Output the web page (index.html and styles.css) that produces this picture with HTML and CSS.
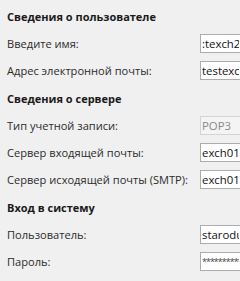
FILE: index.html
```html
<!DOCTYPE html>
<html lang="ru">

<head>
    <title>Параметры учетной записи</title>
    <meta charset="UTF-8">
    <link rel="stylesheet" href="styles.css">
</head>

<body>
    <section class="group">
        <h2>Сведения о пользователе</h2>
        <div class="row">
            <label for="name">Введите имя:</label>
            <input type="text" id="name" value=":texch2016" readonly>
        </div>
        <div class="row">
            <label for="email">Адрес электронной почты:</label>
            <input type="text" id="email" value="testexch2016@mail.local" readonly>
        </div>
    </section>
    <section class="group">
        <h2>Сведения о сервере</h2>
        <div class="row">
            <label for="type">Тип учетной записи:</label>
            <input type="text" id="type" value="POP3" disabled>
        </div>
        <div class="row">
            <label for="incoming">Сервер входящей почты:</label>
            <input type="text" id="incoming" value="exch01.mail.local" readonly>
        </div>
        <div class="row">
            <label for="outgoing">Сервер исходящей почты (SMTP):</label>
            <input type="text" id="outgoing" value="exch01.mail.local" readonly>
        </div>
    </section>
    <section class="group">
        <h2>Вход в систему</h2>
        <div class="row">
            <label for="user">Пользователь:</label>
            <input type="text" id="user" value="starodubov" readonly>
        </div>
        <div class="row">
            <label for="pass">Пароль:</label>
            <input type="text" id="pass" class="secret" value="**********" readonly>
        </div>
    </section>
</body>

</html>
```

FILE: styles.css
```css
html {
    height: 100%;
}

body {
    margin: 0;
    padding: 4px 0 0 7px;
    background-color: #f0f0f0;
    color: #2b2b2b;
    font-family: "Open Sans", "Noto Sans", sans-serif;
    font-size: 11.1px;
    overflow: hidden;
}

.group + .group {
    margin-top: 2px;
}

h2 {
    margin: 0;
    font-size: 11px;
    font-weight: bold;
    line-height: 26px;
    color: #1a1a1a;
}

.row {
    display: grid;
    grid-template-columns: 193px 1fr;
    align-items: center;
    height: 27px;
}

.row label {
    white-space: nowrap;
}

.row input {
    box-sizing: border-box;
    height: 19px;
    width: 100%;
    min-width: 0;
    margin: 0;
    padding: 0 1px;
    border: 1px solid #abadb3;
    border-right: none;
    background: #fff;
    color: #111;
    font-family: inherit;
    font-size: 11.4px;
    outline: none;
}

.row input:disabled {
    background: #f4f4f4;
    border-color: #d4d4d4;
    color: #8a8a8a;
}

.row input.secret {
    font-size: 9px;
    letter-spacing: -1px;
    color: #444;
}
```
